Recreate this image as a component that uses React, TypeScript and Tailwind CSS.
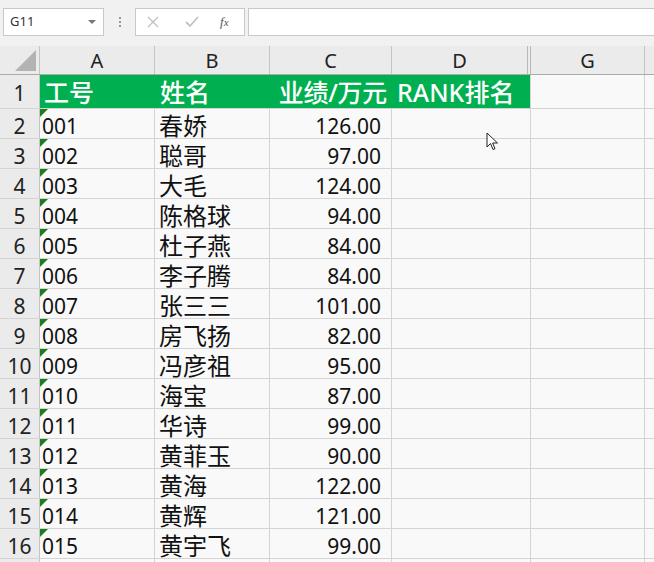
import { useState } from "react";

interface Row {
  id: string;
  name: string;
  score: string;
}

const rows: Row[] = [
  { id: "001", name: "春娇", score: "126.00" },
  { id: "002", name: "聪哥", score: "97.00" },
  { id: "003", name: "大毛", score: "124.00" },
  { id: "004", name: "陈格球", score: "94.00" },
  { id: "005", name: "杜子燕", score: "84.00" },
  { id: "006", name: "李子腾", score: "84.00" },
  { id: "007", name: "张三三", score: "101.00" },
  { id: "008", name: "房飞扬", score: "82.00" },
  { id: "009", name: "冯彦祖", score: "95.00" },
  { id: "010", name: "海宝", score: "87.00" },
  { id: "011", name: "华诗", score: "99.00" },
  { id: "012", name: "黄菲玉", score: "90.00" },
  { id: "013", name: "黄海", score: "122.00" },
  { id: "014", name: "黄辉", score: "121.00" },
  { id: "015", name: "黄宇飞", score: "99.00" },
];

const font = { fontFamily: '"Noto Sans", "Noto Sans CJK SC", sans-serif' };

export default function App() {
  const [cell] = useState("G11");

  return (
    <div className="w-[654px] h-[562px] overflow-hidden bg-[#f9f9f9] relative" style={font}>
      {/* 编辑栏 */}
      <div className="h-[46px] bg-[#f1f1f1] flex items-start pt-[8px] pl-[3px]">
        <div className="w-[101px] h-[28px] bg-white border border-[#c8c8c8] flex items-center justify-between pl-[6px] pr-[7px]">
          <span className="text-[13px] text-[#333]">{cell}</span>
          <span className="w-0 h-0 border-l-[4px] border-r-[4px] border-t-[4px] border-l-transparent border-r-transparent border-t-[#777]" />
        </div>
        <div className="w-[31px] h-[28px] flex flex-col items-center justify-center gap-[2px]">
          <span className="w-[2px] h-[2px] bg-[#999]" />
          <span className="w-[2px] h-[2px] bg-[#999]" />
          <span className="w-[2px] h-[2px] bg-[#999]" />
        </div>
        <div className="w-[110px] h-[28px] bg-white border border-[#c8c8c8] flex items-center pl-[11px]">
          <svg width="12" height="12" viewBox="0 0 12 12" className="mr-[26px]">
            <path d="M1 1 L11 11 M11 1 L1 11" stroke="#c2c2c2" strokeWidth="1.4" />
          </svg>
          <svg width="14" height="12" viewBox="0 0 14 12" className="mr-[21px]">
            <path d="M1 6 L5 10 L13 1" stroke="#c2c2c2" strokeWidth="1.8" fill="none" />
          </svg>
          <span className="text-[13px] italic text-[#555]" style={{ fontFamily: '"Liberation Serif", serif' }}>
            f<span className="text-[11px]">x</span>
          </span>
        </div>
        <div className="ml-[3px] flex-1 h-[28px] bg-white border border-[#c8c8c8] border-r-0" />
      </div>

      {/* 列标题 */}
      <div className="flex h-[29px] bg-[#ebebeb] border-b border-[#ababab] text-[20px] text-[#222]">
        <div className="w-[40px] border-r border-[#c4c4c4] relative">
          <span className="absolute right-[3px] bottom-[3px] w-0 h-0"
            style={{ borderBottom: "21px solid #b3b3b3", borderLeft: "21px solid transparent" }} />
        </div>
        <div className="w-[115px] border-r border-[#c4c4c4] flex items-end justify-center leading-[26px]">A</div>
        <div className="w-[115px] border-r border-[#c4c4c4] flex items-end justify-center leading-[26px]">B</div>
        <div className="w-[122px] border-r border-[#c4c4c4] flex items-end justify-center leading-[26px]">C</div>
        <div className="w-[136px] border-r border-[#b8b8b8] flex items-end justify-center leading-[26px]">D</div>
        <div className="w-[3px] border-r border-[#b8b8b8]" />
        <div className="w-[114px] border-r border-[#c4c4c4] flex items-end justify-center leading-[26px]">G</div>
        <div className="flex-1" />
      </div>

      {/* 第1行 标题 */}
      <div className="flex h-[34px] border-b border-[#d4d4d4]">
        <div className="w-[40px] bg-[#ebebeb] border-r border-[#c4c4c4] flex items-center justify-center text-[21px] text-[#222] pt-[4px]">1</div>
        <div className="w-[490px] bg-[#00b050] flex items-center text-[25px] text-white font-medium pt-[2px]">
          <span className="w-[115px] pl-[4px]">工号</span>
          <span className="w-[115px] pl-[5px]">姓名</span>
          <span className="w-[122px] text-right pr-[5px] whitespace-nowrap tracking-[-0.3px]">业绩/万元</span>
          <span className="w-[138px] pl-[5px] whitespace-nowrap">RANK排名</span>
        </div>
        <div className="w-[115px] border-l border-r border-[#d4d4d4]" />
        <div className="flex-1" />
      </div>

      {/* 数据行 */}
      {rows.map((r, i) => (
        <div key={r.id} className="flex h-[30px] border-b border-[#d4d4d4] text-[#111]">
          <div className="w-[40px] bg-[#ebebeb] border-r border-[#c4c4c4] flex items-center justify-center text-[21px] text-[#222] pt-[6px]">{i + 2}</div>
          <div className="w-[115px] border-r border-[#d4d4d4] relative flex items-center pl-[2px] text-[21px] pt-[6px]">
            <span className="absolute left-0 top-0 w-0 h-0" style={{ borderTop: "8px solid #1a7f1a", borderRight: "8px solid transparent" }} />
            {r.id}
          </div>
          <div className="w-[115px] border-r border-[#d4d4d4] flex items-center pl-[4px] text-[24px] pt-[5px]">{r.name}</div>
          <div className="w-[122px] border-r border-[#d4d4d4] flex items-center justify-end pr-[10px] text-[21px] pt-[6px]">{r.score}</div>
          <div className="w-[139px] border-r border-[#d4d4d4]" />
          <div className="w-[114px] border-r border-[#d4d4d4]" />
          <div className="flex-1" />
        </div>
      ))}
      <div className="flex h-[4px]">
        <div className="w-[40px] bg-[#ebebeb] border-r border-[#c4c4c4]" />
        <div className="w-[115px] border-r border-[#d4d4d4]" />
        <div className="w-[115px] border-r border-[#d4d4d4]" />
        <div className="w-[122px] border-r border-[#d4d4d4]" />
        <div className="w-[139px] border-r border-[#d4d4d4]" />
        <div className="w-[114px] border-r border-[#d4d4d4]" />
      </div>

      {/* 鼠标指针 */}
      <svg width="14" height="20" viewBox="0 0 14 20" className="absolute left-[486px] top-[132px]">
        <path d="M1 1 L1 15 L4.5 11.5 L7 17.5 L9 16.7 L6.6 11 L11.5 11 Z" fill="white" stroke="#222" strokeWidth="1" strokeLinejoin="round" />
      </svg>
    </div>
  );
}
